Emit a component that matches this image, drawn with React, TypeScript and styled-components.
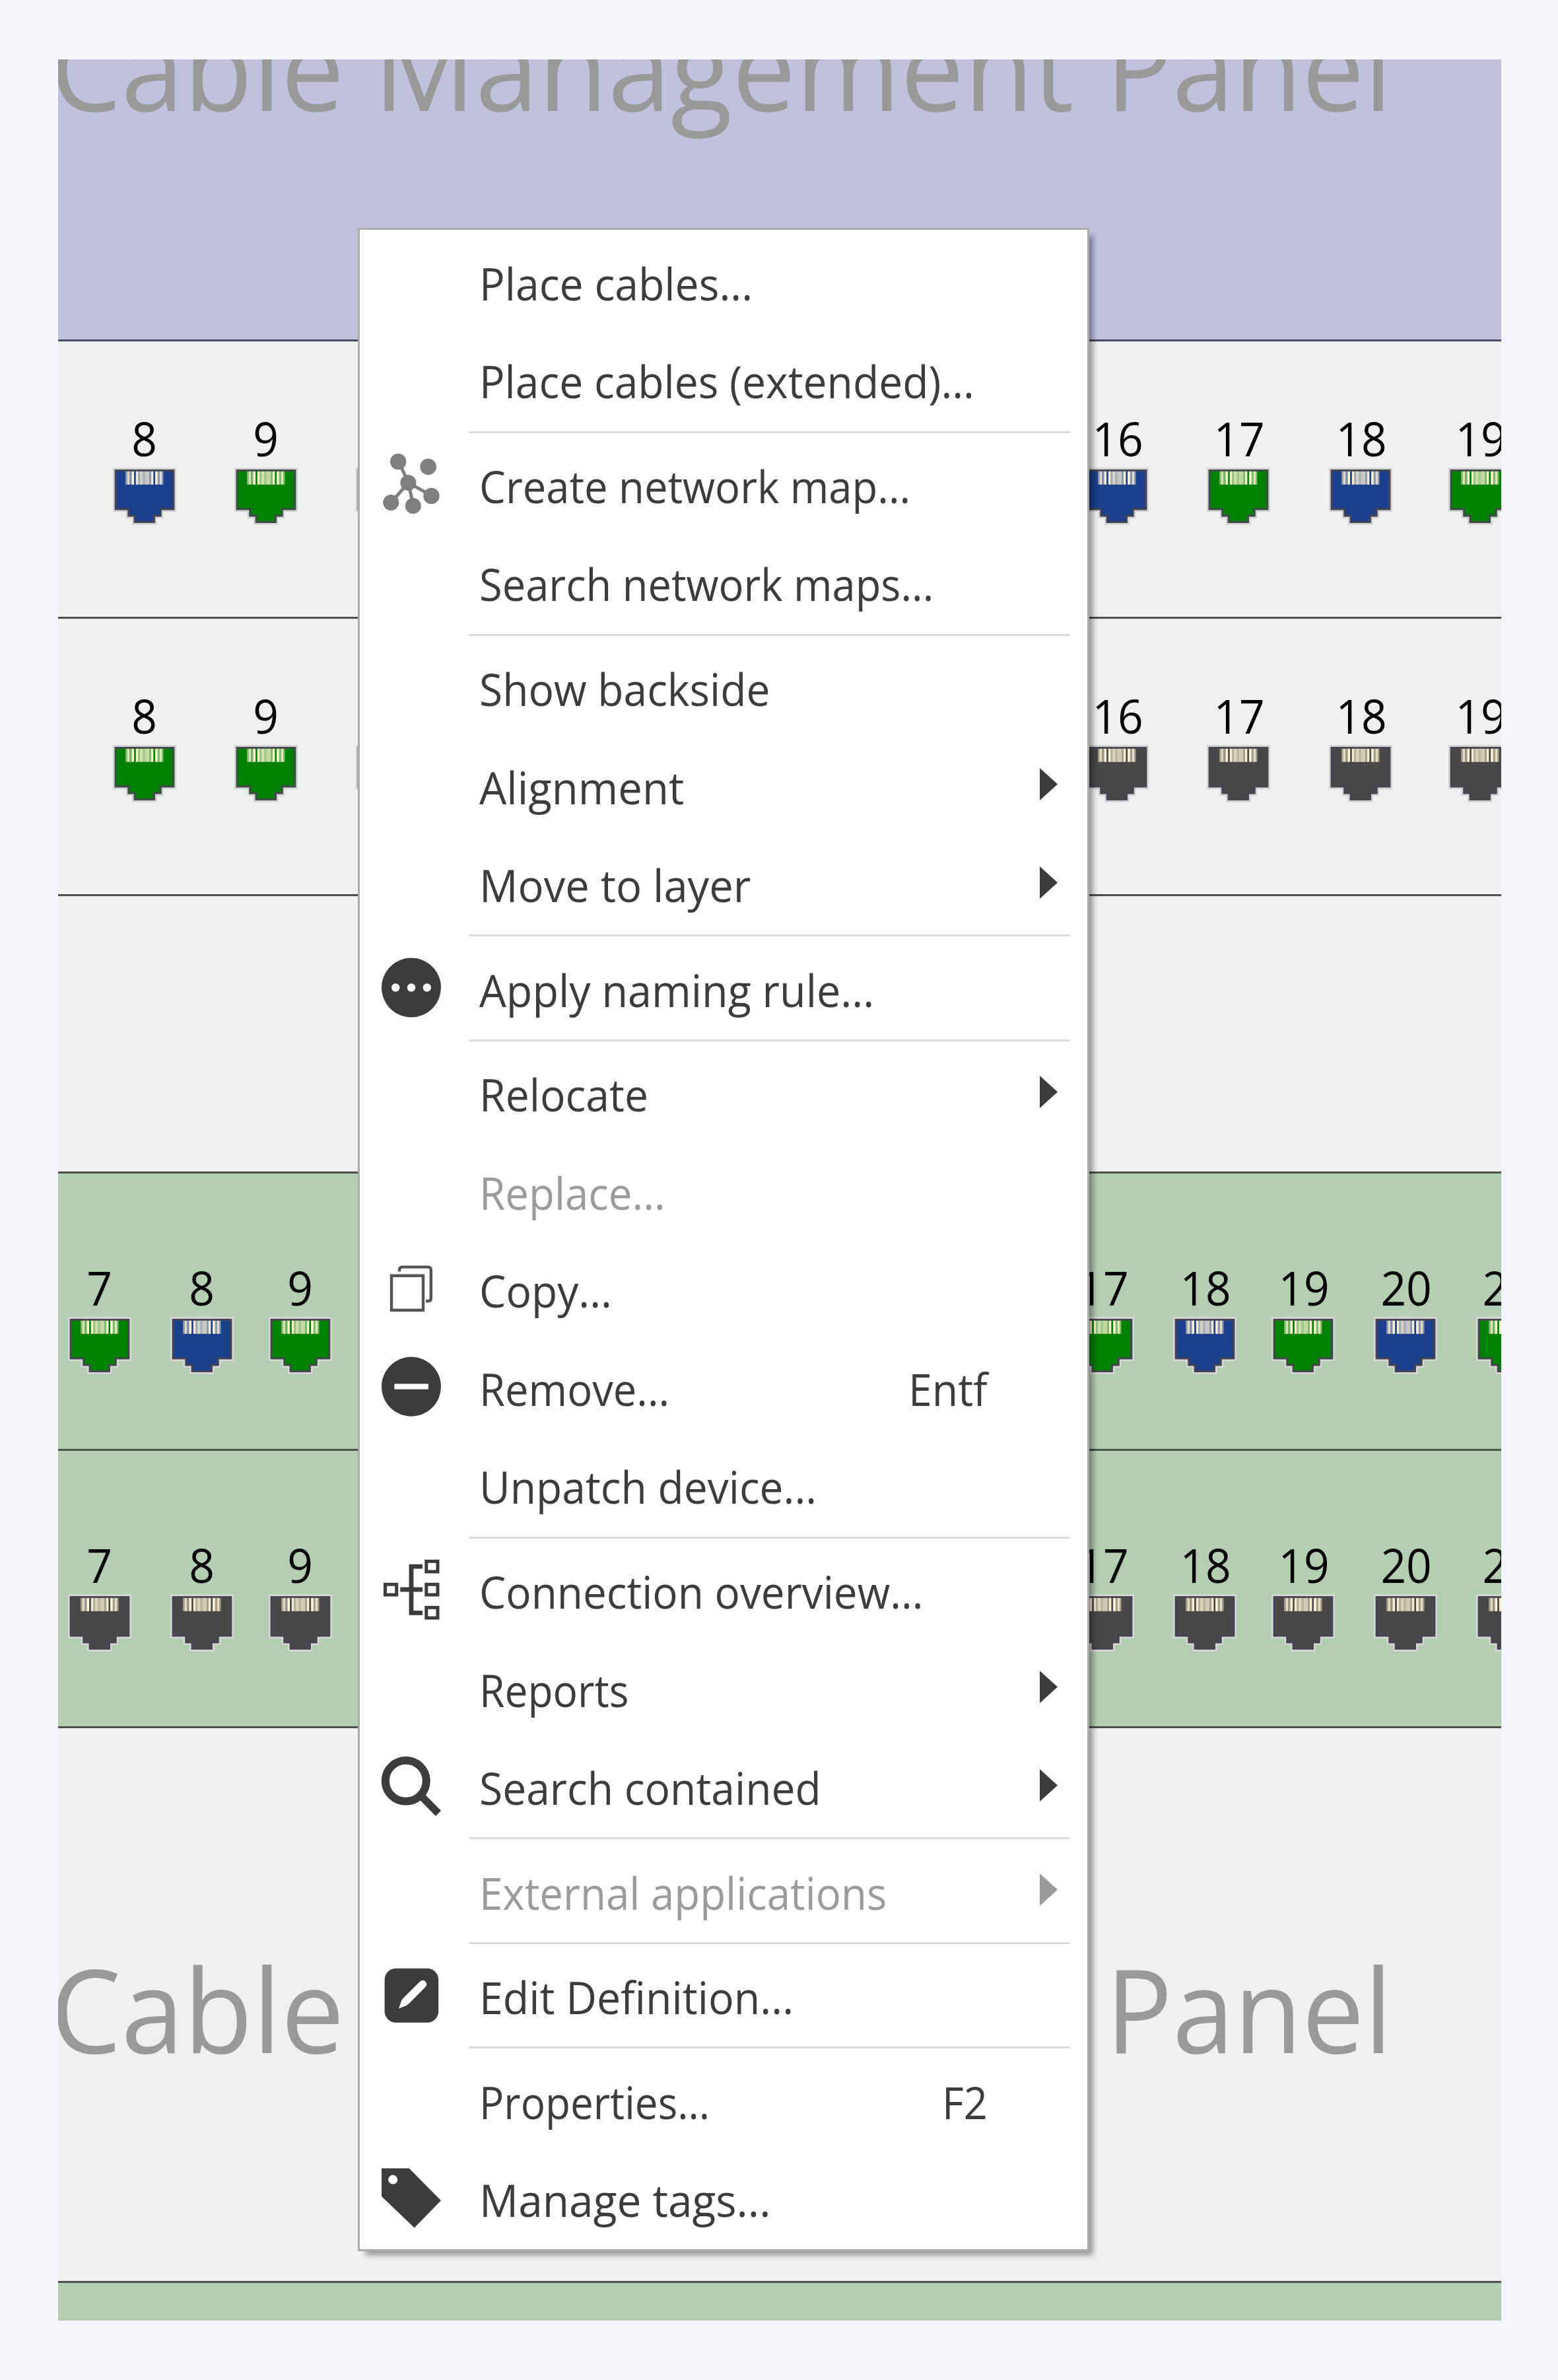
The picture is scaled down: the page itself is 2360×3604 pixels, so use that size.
import React, { useLayoutEffect, useRef, useState } from 'react';
import styled, { createGlobalStyle } from 'styled-components';

const GlobalStyle = createGlobalStyle`
  * { box-sizing: border-box; }
  body {
    margin: 0;
    background: #f4f6fb;
    font-family: 'Open Sans', 'Noto Sans', sans-serif;
  }
`;

const Page = styled.div`
  width: 2360px;
  height: 3604px;
  padding: 90px 86px 90px 88px;
  overflow: hidden;
`;

const Rack = styled.div`
  position: relative;
  width: 2186px;
  height: 3424px;
  overflow: hidden;
  background: #f0f0f0;
`;

const Unit = styled.div<{ $bg: string; $tall?: boolean; $shift?: number; $line?: string }>`
  height: ${(p) => (p.$tall ? 840 : 420)}px;
  margin-top: ${(p) => p.$shift ?? 0}px;
  background: ${(p) => p.$bg};
  border-bottom: 3px solid ${(p) => p.$line ?? '#4e4e4e'};
  overflow: hidden;
`;

const PanelTitle = styled.div<{ $top: number }>`
  display: grid;
  grid-template-columns: 490px 1109px 440px;
  justify-items: start;
  padding-top: ${(p) => p.$top}px;
  margin-left: -12px;
  color: #999;
  font-size: 176px;
  line-height: 176px;
`;

const PortGrid = styled.div<{ $columns: string; $top: number; $left: number }>`
  display: grid;
  grid-template-columns: ${(p) => p.$columns};
  padding: ${(p) => p.$top}px 0 0 ${(p) => p.$left}px;
`;

const Port = styled.div`
  width: 96px;
  display: flex;
  flex-direction: column;
  align-items: center;
  gap: 9px;
`;

const PortNumber = styled.span<{ $wide: boolean }>`
  height: 72px;
  padding-left: ${(p) => (p.$wide ? 2 : 0)}px;
  font-size: 72px;
  line-height: 72px;
  color: #000;
  white-space: nowrap;
  transform: scaleX(0.94);
`;

const Menu = styled.div`
  position: absolute;
  left: 454px;
  top: 255px;
  width: 1108px;
  height: 3064px;
  padding-top: 4px;
  display: flex;
  flex-direction: column;
  background: #fff;
  border: 3px solid #ababab;
  box-shadow: 9px 9px 8px -3px rgba(0, 0, 0, 0.36);
`;

const MenuRow = styled.div<{ $disabled?: boolean }>`
  height: 148.6px;
  flex: none;
  display: grid;
  grid-template-columns: 148.5px 1fr auto 148px;
  align-items: center;
  padding-left: 32.5px;
  color: ${(p) => (p.$disabled ? '#9b9b9b' : '#3c3c3c')};
  font-size: 67px;
  line-height: 90px;
`;

const IconSlot = styled.div`
  width: 92px;
  height: 92px;
`;

const Label = styled.div`
  padding-top: 5px;
  height: 95px;
`;

const Shortcut = styled(Label)`
  padding-right: 3px;
`;

const ArrowSlot = styled.div`
  padding-left: 76px;
  height: 52px;

  svg {
    display: block;
  }
`;

const Separator = styled.div`
  flex: none;
  height: 3px;
  margin: 3.4px 26px 3.5px 165px;
  background: #dcdede;
`;

const Squeezed = styled.span`
  display: inline-block;
  white-space: nowrap;
  transform-origin: left center;
`;

/* Narrows a text horizontally so that it takes the given advance width. */
function FitText({ width, children }: { width: number; children: string }) {
  const ref = useRef<HTMLSpanElement>(null);
  const [scale, setScale] = useState(0.94);
  useLayoutEffect(() => {
    if (ref.current) setScale(width / ref.current.offsetWidth);
  }, [width, children]);
  return (
    <Squeezed ref={ref} style={{ transform: `scaleX(${scale})` }}>
      {children}
    </Squeezed>
  );
}

const BLUE = '#1b3f8b';
const GREEN = '#008000';
const DARK = '#484848';

const PINS: [number, number, number][] = [
  [16.3, 2.4, 0.5], [18.7, 3.6, 0.85], [22.3, 3.3, 0.45], [25.6, 3.7, 1],
  [32, 3.6, 0.95], [35.6, 2.7, 0.6], [38.3, 4, 0.82], [42.3, 3.2, 0.66],
  [45.5, 7.1, 0.76], [52.6, 2.5, 0.5], [55.1, 3.5, 0.95], [61.3, 3.7, 1],
  [65, 3, 0.5], [68, 3.5, 0.87], [71.5, 2.2, 0.5],
];

const JACK = 'M0 0H90.4V61.3H70.7V71.3H61V81H29V71.3H19.7V61.3H0Z';

function Jack({ color, halo }: { color: string; halo: string }) {
  return (
    <svg width="96" height="87" viewBox="-2.8 -3 96 87">
      <path d={JACK} fill={halo} stroke={halo} strokeWidth="5.6" />
      <path d={JACK} fill={color} />
      <path
        d="M1.4 1.4H89V59.9H69.3V69.9H59.6V79.6H30.4V69.9H21.1V59.9H1.4Z"
        fill="none"
        stroke="#45454f"
        strokeWidth="2.8"
      />
      {PINS.map(([x, w, o]) => (
        <rect key={x} x={x} y="2.8" width={w} height="20" fill="#fff5d6" opacity={o} />
      ))}
    </svg>
  );
}

/* Port number (null: no number), centre on the x axis, colour. */
type PortSpec = [number | null, number, string];

function PortRow({ ports, top, halo }: { ports: PortSpec[]; top: number; halo: string }) {
  const columns = ports
    .map(([, c], i) => `${(i + 1 < ports.length ? ports[i + 1][1] - c : 96).toFixed(1)}px`)
    .join(' ');
  return (
    <PortGrid $columns={columns} $top={top} $left={ports[0][1] - 88 - 48}>
      {ports.map(([n, c, color]) => (
        <Port key={c}>
          <PortNumber $wide={n !== null && n > 9}>{n}</PortNumber>
          <Jack color={color} halo={halo} />
        </Port>
      ))}
    </PortGrid>
  );
}

const INK = '#3c3c3c';

const icons: Record<string, React.ReactNode> = {
  network: (
    <g fill="#7f7f7f" stroke="#7f7f7f">
      <path d="M40.6 43.8L25.6 11.3M40.6 43.8L75.6 63.7M40.6 43.8L14.7 73.7M40.6 43.8L48 78.7" strokeWidth="5" />
      <g stroke="none">
        <circle cx="25.2" cy="12" r="12.2" />
        <circle cx="70.6" cy="19.8" r="12.4" />
        <circle cx="40.4" cy="44" r="12" />
        <circle cx="75.4" cy="64" r="12.2" />
        <circle cx="14.3" cy="74" r="12.1" />
        <circle cx="47.8" cy="79" r="12" />
      </g>
    </g>
  ),
  dots: (
    <g>
      <circle cx="45" cy="45.5" r="45" fill={INK} />
      <g fill="#fff">
        <circle cx="21.2" cy="45.5" r="6.2" />
        <circle cx="45" cy="45.5" r="6.2" />
        <circle cx="68.8" cy="45.5" r="6.2" />
      </g>
    </g>
  ),
  copy: (
    <g fill="none" stroke="#555" strokeWidth="4.4">
      <path d="M15 25.8H63V78H15Z" />
      <path d="M27 19.5V17Q27 12.6 31.2 12.6H70.6Q74.8 12.6 74.8 17V60Q74.8 64.3 70.6 64.3H67" />
    </g>
  ),
  minus: (
    <g>
      <circle cx="45" cy="45.8" r="45" fill={INK} />
      <rect x="19.3" y="41.6" width="51.6" height="8.2" rx="1" fill="#fff" />
    </g>
  ),
  tree: (
    <g fill="none" stroke={INK}>
      <path
        d="M5.5 38.2H22.7V53.9H5.5ZM67.8 3.2H85V18.9H67.8ZM67.8 38.2H85V53.9H67.8ZM67.8 73.2H85V88.9H67.8Z"
        strokeWidth="5"
      />
      <path d="M62 11.1H45V81.3H62M28.3 46H62" strokeWidth="6.8" />
    </g>
  ),
  search: (
    <g fill="none" stroke={INK}>
      <circle cx="36.8" cy="37.8" r="31" strokeWidth="12" />
      <path d="M59 59.5L86 87" strokeWidth="11.5" />
    </g>
  ),
  edit: (
    <g>
      <rect x="4.6" y="4.8" width="81.6" height="82" rx="17" fill={INK} />
      <path
        d="M26 65.5L29.8 54.5Q31 51.5 34 48.5L58 24.8Q62 21 66.3 24.3Q70 28.5 66.3 33L42.5 57Q39.5 60 36.8 61.2Z"
        fill="#fff"
      />
    </g>
  ),
  tag: (
    <g>
      <path d="M0 .4H41.7L90 49.2L49.7 90.6L0 42.9Z" fill={INK} />
      <circle cx="17.2" cy="17.6" r="7" fill="#fff" />
    </g>
  ),
};

type Item = {
  label: string;
  width: number;
  icon?: string;
  arrow?: boolean;
  disabled?: boolean;
  shortcut?: [string, number];
};

const groups: Item[][] = [
  [
    { label: 'Place cables...', width: 414 },
    { label: 'Place cables (extended)...', width: 750 },
  ],
  [
    { label: 'Create network map...', width: 653, icon: 'network' },
    { label: 'Search network maps...', width: 688 },
  ],
  [
    { label: 'Show backside', width: 440 },
    { label: 'Alignment', width: 310, arrow: true },
    { label: 'Move to layer', width: 411, arrow: true },
  ],
  [{ label: 'Apply naming rule...', width: 598, icon: 'dots' }],
  [
    { label: 'Relocate', width: 256, arrow: true },
    { label: 'Replace...', width: 282, disabled: true },
    { label: 'Copy...', width: 201, icon: 'copy' },
    { label: 'Remove...', width: 288, icon: 'minus', shortcut: ['Entf', 120] },
    { label: 'Unpatch device...', width: 511 },
  ],
  [
    { label: 'Connection overview...', width: 673, icon: 'tree' },
    { label: 'Reports', width: 226, arrow: true },
    { label: 'Search contained', width: 518, icon: 'search', arrow: true },
  ],
  [{ label: 'External applications', width: 617, arrow: true, disabled: true }],
  [{ label: 'Edit Definition...', width: 476, icon: 'edit' }],
  [
    { label: 'Properties...', width: 349, shortcut: ['F2', 69] },
    { label: 'Manage tags...', width: 441, icon: 'tag' },
  ],
];

const ShortcutBox = styled.div<{ $width: number }>`
  width: ${(p) => p.$width}px;
`;

function MenuItem({ item }: { item: Item }) {
  return (
    <MenuRow $disabled={item.disabled}>
      <IconSlot>
        {item.icon && (
          <svg width="92" height="92" viewBox="0 0 92 92">
            {icons[item.icon]}
          </svg>
        )}
      </IconSlot>
      <Label>
        <FitText width={item.width}>{item.label}</FitText>
      </Label>
      <Shortcut>
        {item.shortcut && (
          <ShortcutBox $width={item.shortcut[1]}>
            <FitText width={item.shortcut[1]}>{item.shortcut[0]}</FitText>
          </ShortcutBox>
        )}
      </Shortcut>
      <ArrowSlot>
        {item.arrow && (
          <svg width="27" height="49" viewBox="0 0 27 49">
            <path d="M0 0L27 24.5L0 49Z" fill="currentColor" />
          </svg>
        )}
      </ArrowSlot>
    </MenuRow>
  );
}

const switchTop: PortSpec[] = [
  [8, 218.5, BLUE],
  [9, 402.8, GREEN],
  [null, 587, BLUE],
  [16, 1692.3, BLUE],
  [17, 1876.5, GREEN],
  [18, 2061, BLUE],
  [19, 2242, GREEN],
];

const switchBottom: PortSpec[] = switchTop.map(([n, c]) => [n, c, c < 500 ? GREEN : DARK]);

const patchTop: PortSpec[] = [
  [7, 151, GREEN],
  [8, 306, BLUE],
  [9, 454.7, GREEN],
  [17, 1670, GREEN],
  [18, 1825, BLUE],
  [19, 1974, GREEN],
  [20, 2129, BLUE],
  [21, 2283.6, GREEN],
];

const patchBottom: PortSpec[] = patchTop.map(([n, c]) => [n, c, DARK]);

export default function App() {
  return (
    <Page>
      <GlobalStyle />
      <Rack>
        <Unit $bg="#c1c0dd" $tall $shift={-413} $line="#4a4963">
          <PanelTitle $top={335}>
            <FitText width={446}>Cable</FitText>
            <FitText width={1061}>Management</FitText>
            <FitText width={434}>Panel</FitText>
          </PanelTitle>
        </Unit>
        <Unit $bg="#f0f0f0">
          <PortRow ports={switchTop} top={110} halo="#d2d2d2" />
        </Unit>
        <Unit $bg="#f0f0f0">
          <PortRow ports={switchBottom} top={110} halo="#d2d2d2" />
        </Unit>
        <Unit $bg="#f0f0f0" />
        <Unit $bg="#b4ceb2" $line="#4b524b">
          <PortRow ports={patchTop} top={136} halo="#d8d6d8" />
        </Unit>
        <Unit $bg="#b4ceb2" $line="#4b524b">
          <PortRow ports={patchBottom} top={136} halo="#d8d6d8" />
        </Unit>
        <Unit $bg="#f0f0f0" $tall>
          <PanelTitle $top={336}>
            <FitText width={446}>Cable</FitText>
            <span />
            <FitText width={434}>Panel</FitText>
          </PanelTitle>
        </Unit>
        <Unit $bg="#b4ceb2" />
        <Menu>
          {groups.map((group, g) => (
            <React.Fragment key={g}>
              {g > 0 && <Separator />}
              {group.map((item) => (
                <MenuItem key={item.label} item={item} />
              ))}
            </React.Fragment>
          ))}
        </Menu>
      </Rack>
    </Page>
  );
}
